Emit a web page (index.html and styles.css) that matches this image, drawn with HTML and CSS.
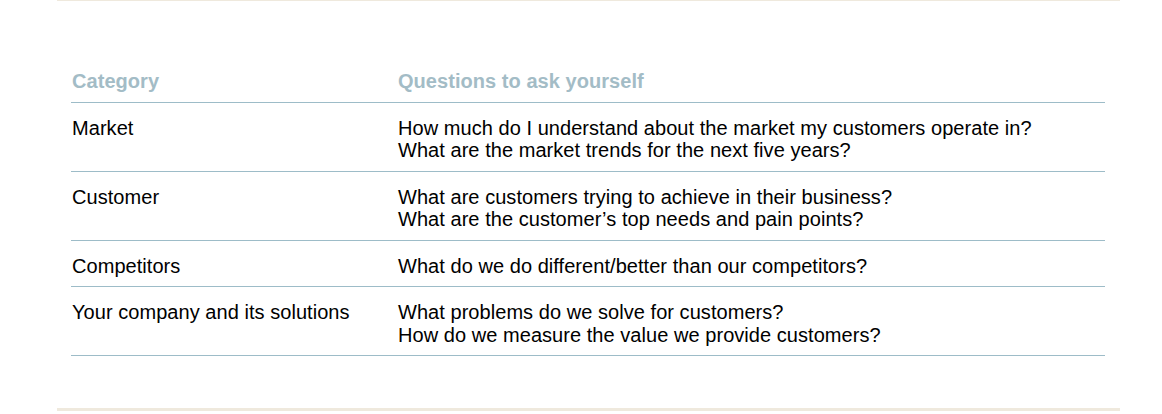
FILE: index.html
```html
<!DOCTYPE html>
<html>
<head>
<meta charset="utf-8">
<link rel="stylesheet" href="styles.css">
</head>
<body>
<div class="page">
  <table class="qa">
    <thead>
      <tr><th class="cat">Category</th><th>Questions to ask yourself</th></tr>
    </thead>
    <tbody>
      <tr><td class="cat">Market</td><td>How much do I understand about the market my customers operate in?<br>What are the market trends for the next five years?</td></tr>
      <tr><td class="cat">Customer</td><td>What are customers trying to achieve in their business?<br>What are the customer’s top needs and pain points?</td></tr>
      <tr><td class="cat">Competitors</td><td>What do we do different/better than our competitors?</td></tr>
      <tr><td class="cat">Your company and its solutions</td><td>What problems do we solve for customers?<br>How do we measure the value we provide customers?</td></tr>
    </tbody>
  </table>
</div>
</body>
</html>
```

FILE: styles.css
```css
html, body {
  margin: 0;
  padding: 0;
  background: #ffffff;
}
body {
  font-family: "Liberation Sans", Arial, sans-serif;
  color: #000000;
}
.page {
  margin-left: 57px;
  width: 1063px;
  height: 411px;
  box-sizing: border-box;
  border-top: 1px solid #efe9dd;
  border-bottom: 3px solid #efe9dd;
  padding: 59px 15px 0 14px;
}
.qa {
  width: 100%;
  border-collapse: collapse;
  font-size: 20px;
  line-height: 22.5px;
  letter-spacing: 0.05px;
}
.qa th {
  text-align: left;
  font-weight: bold;
  color: #a3bcc6;
  padding: 10px 0 9px 1px;
  border-bottom: 1px solid #9dbcc8;
}
.qa td {
  text-align: left;
  vertical-align: top;
  padding: 14px 0 9px 1px;
  border-bottom: 1px solid #9dbcc8;
}
.qa .cat {
  width: 325px;
}
```
